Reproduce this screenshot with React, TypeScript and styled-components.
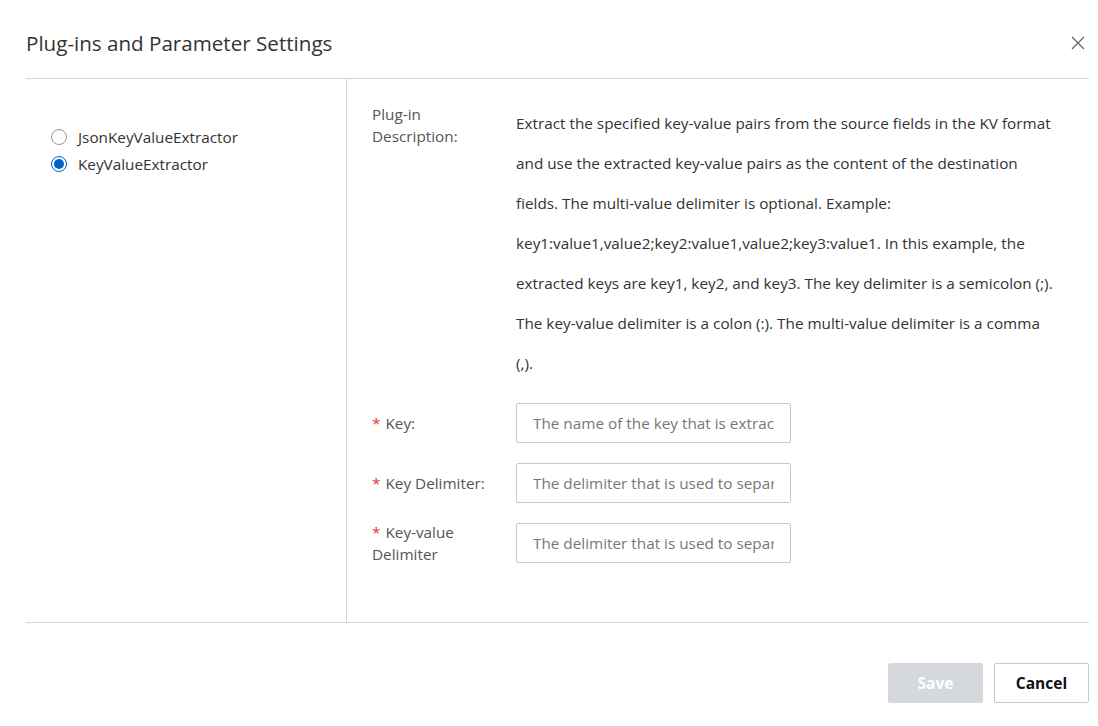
import React from "react";
import styled, { createGlobalStyle } from "styled-components";

const Global = createGlobalStyle`
  html, body { margin: 0; padding: 0; background: #ffffff; }
  body { font-family: "Open Sans", "Noto Sans", sans-serif; color: #333; }
  * { box-sizing: border-box; }
`;

const Dialog = styled.div`
  width: 1098px;
  height: 726px;
  padding: 0 9px 0 26px;
  display: flex;
  flex-direction: column;
  background: #fff;
`;

const Header = styled.div`
  height: 79px;
  display: flex;
  align-items: center;
  justify-content: space-between;
  border-bottom: 1px solid #d4d4d4;
  padding-top: 8px;
`;

const Title = styled.h1`
  margin: 0;
  font-size: 20.6px;
  font-weight: 400;
  color: #333;
`;

const Close = styled.button`
  width: 20px;
  height: 20px;
  border: 0;
  padding: 0;
  background: none;
  margin-right: 1px;
  display: flex;
  align-items: center;
  justify-content: center;
  color: #666;
  cursor: pointer;
`;

const Body = styled.div`
  height: 544px;
  display: flex;
  border-bottom: 1px solid #d4d4d4;
`;

const Side = styled.div`
  width: 321px;
  border-right: 1px solid #d4d4d4;
  padding: 47px 0 0 25px;
  display: flex;
  flex-direction: column;
  gap: 5px;
`;

const RadioRow = styled.label`
  display: flex;
  align-items: center;
  gap: 11px;
  height: 22px;
  font-size: 15.3px;
  color: #333;
  cursor: pointer;
`;

const RadioDot = styled.span<{ $checked?: boolean }>`
  width: 16px;
  height: 16px;
  border-radius: 50%;
  border: 1px solid ${(p) => (p.$checked ? "#0064c8" : "#8c96a0")};
  display: flex;
  align-items: center;
  justify-content: center;
  &::after {
    content: "";
    width: 10px;
    height: 10px;
    border-radius: 50%;
    background: ${(p) => (p.$checked ? "#0064c8" : "transparent")};
  }
`;

const Main = styled.div`
  flex: 1;
  padding: 24px 0 0 25px;
  display: flex;
  flex-direction: column;
`;

const DescRow = styled.div`
  display: flex;
  margin-bottom: 20px;
`;

const FieldRow = styled.div`
  display: flex;
  align-items: center;
  height: 40px;
  margin-bottom: 20px;
`;

const Label = styled.div`
  width: 144px;
  flex: none;
  font-size: 15.3px;
  line-height: 22px;
  color: #555;
  padding-right: 30px;
`;

const Req = styled.span`
  color: #e0383e;
  margin-right: 5px;
`;

const Desc = styled.p`
  margin: 0;
  width: 560px;
  font-size: 15.3px;
  line-height: 40px;
  color: #333;
  white-space: nowrap;
`;

const Input = styled.input`
  width: 275px;
  height: 40px;
  border: 1px solid #c4c9ce;
  border-radius: 2px;
  padding: 0 16px;
  font-family: inherit;
  font-size: 15.3px;
  color: #333;
  outline: none;
  &::placeholder { color: #777; }
`;

const Footer = styled.div`
  flex: 1;
  display: flex;
  justify-content: flex-end;
  align-items: flex-start;
  padding-top: 40px;
  gap: 11px;
`;

const Button = styled.button<{ $primary?: boolean }>`
  width: 95px;
  height: 40px;
  border-radius: 2px;
  font-family: inherit;
  font-size: 15.5px;
  font-weight: 700;
  border: 1px solid ${(p) => (p.$primary ? "#d5d9dd" : "#c4c9ce")};
  background: ${(p) => (p.$primary ? "#d5d9dd" : "#fff")};
  color: ${(p) => (p.$primary ? "#fff" : "#111")};
  cursor: pointer;
`;

const lines = [
  "Extract the specified key-value pairs from the source fields in the KV format",
  "and use the extracted key-value pairs as the content of the destination",
  "fields. The multi-value delimiter is optional. Example:",
  "key1:value1,value2;key2:value1,value2;key3:value1. In this example, the",
  "extracted keys are key1, key2, and key3. The key delimiter is a semicolon (;).",
  "The key-value delimiter is a colon (:). The multi-value delimiter is a comma",
  "(,).",
];

export default function App() {
  return (
    <>
      <Global />
      <Dialog>
        <Header>
          <Title>Plug-ins and Parameter Settings</Title>
          <Close aria-label="Close">
            <svg width="14" height="14" viewBox="0 0 14 14">
              <path d="M1 1L13 13M13 1L1 13" stroke="#666" strokeWidth="1.3" fill="none" />
            </svg>
          </Close>
        </Header>
        <Body>
          <Side>
            <RadioRow>
              <RadioDot />
              JsonKeyValueExtractor
            </RadioRow>
            <RadioRow>
              <RadioDot $checked />
              KeyValueExtractor
            </RadioRow>
          </Side>
          <Main>
            <DescRow>
              <Label>Plug-in Description:</Label>
              <Desc>
                {lines.map((l, i) => (
                  <React.Fragment key={i}>
                    {l}
                    {i < lines.length - 1 && <br />}
                  </React.Fragment>
                ))}
              </Desc>
            </DescRow>
            <FieldRow>
              <Label><Req>*</Req>Key:</Label>
              <Input placeholder="The name of the key that is extracted" />
            </FieldRow>
            <FieldRow>
              <Label><Req>*</Req>Key Delimiter:</Label>
              <Input placeholder="The delimiter that is used to separate keys" />
            </FieldRow>
            <FieldRow>
              <Label><Req>*</Req>Key-value Delimiter</Label>
              <Input placeholder="The delimiter that is used to separate keys and values" />
            </FieldRow>
          </Main>
        </Body>
        <Footer>
          <Button $primary>Save</Button>
          <Button>Cancel</Button>
        </Footer>
      </Dialog>
    </>
  );
}
